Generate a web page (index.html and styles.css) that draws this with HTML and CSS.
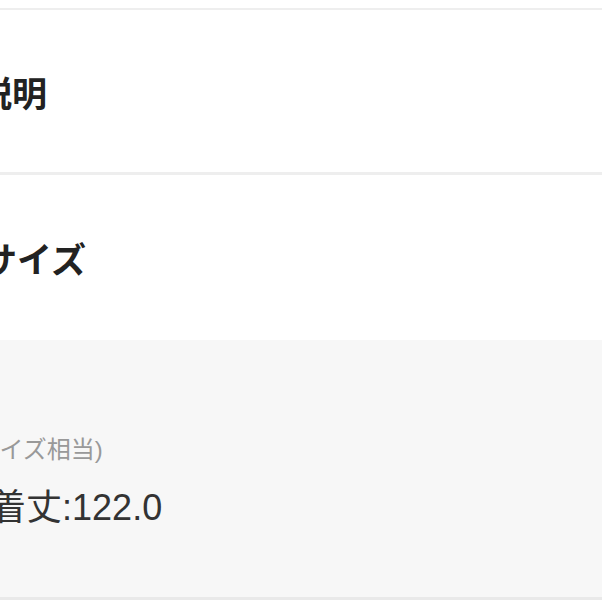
FILE: index.html
```html
<!DOCTYPE html>
<html lang="ja">
<head>
<meta charset="utf-8">
<link rel="stylesheet" href="styles.css">
</head>
<body>
<div class="page">
  <div class="top-space"></div>
  <div class="divider"></div>
  <section class="block">
    <h2 class="title desc">商品説明</h2>
  </section>
  <div class="divider thick"></div>
  <section class="block tall">
    <h2 class="title size">商品サイズ</h2>
  </section>
  <section class="sizes">
    <p class="note">(フリーサイズ相当)</p>
    <p class="measure">身幅:60.0 着丈:122.0</p>
  </section>
  <div class="bottom-line"></div>
</div>
</body>
</html>
```
FILE: styles.css
```css
html, body {
  margin: 0;
  padding: 0;
  background: #ffffff;
  overflow: hidden;
}
.page {
  width: 602px;
  height: 602px;
  overflow: hidden;
  font-family: "Liberation Sans", "Noto Sans CJK JP", sans-serif;
}
.top-space {
  height: 8px;
  background: #ffffff;
}
.divider {
  height: 2px;
  background: #eeeeee;
}
.divider.thick {
  height: 3px;
}
.block {
  height: 162px;
  display: flex;
  align-items: center;
  background: #ffffff;
}
.block.tall {
  height: 165px;
}
.title {
  margin: 0;
  font-family: "Noto Sans CJK JP", sans-serif;
  font-size: 35px;
  font-weight: 700;
  color: #222222;
  line-height: 1;
  white-space: nowrap;
}
.title.desc {
  margin-left: -93px;
}
.title.size {
  margin-left: -88px;
}
.sizes {
  height: 257px;
  background: #f7f7f7;
  display: flex;
  flex-direction: column;
}
.note {
  margin: 94px 0 0 -104px;
  font-size: 24px;
  line-height: 32px;
  color: #999999;
  white-space: nowrap;
}
.measure {
  margin: 21px 0 0 -172px;
  font-size: 36px;
  line-height: 42px;
  color: #333333;
  white-space: nowrap;
}
.bottom-line {
  height: 3px;
  background: #e9e9e9;
}
```
